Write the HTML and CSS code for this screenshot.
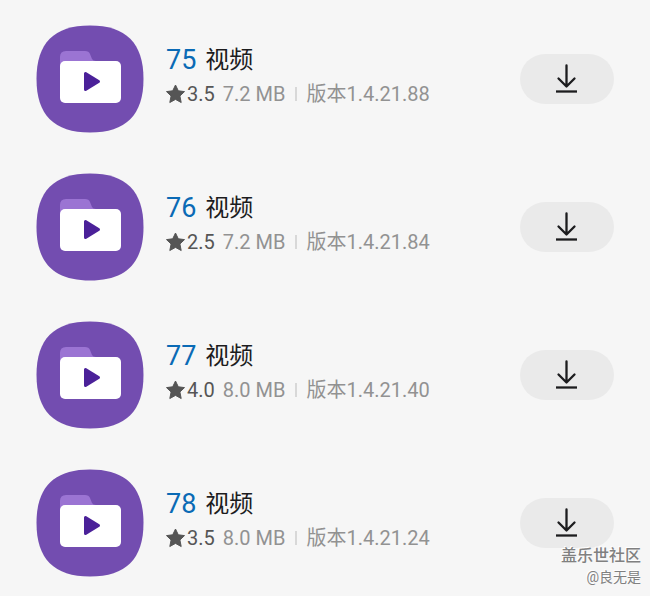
FILE: index.html
```
<!DOCTYPE html>
<html lang="zh-CN">
<head>
<meta charset="utf-8">
<meta name="viewport" content="width=device-width, initial-scale=1">
<title>视频</title>
<link rel="stylesheet" href="styles.css">
</head>
<body>
<svg class="defs" aria-hidden="true">
  <symbol id="app" viewBox="0 0 108 108">
    <path fill="#734db0" d="M54 .5C90 .5 107.500 18 107.500 54S90 107.500 54 107.500.5 90 .5 54 18 .5 54 .5Z"/>
    <path fill="#9b74d3" d="M24 46V32q0-6 6-6h19q4 0 5 3l2 5q1 2 4 2v10Z"/>
    <rect x="24" y="36" width="61" height="42" rx="5" fill="#fff"/>
    <path fill="#4b2199" stroke="#4b2199" stroke-width="3" stroke-linejoin="round" d="M49.500 48.500v16l13-8Z"/>
  </symbol>
  <symbol id="star" viewBox="0 0 20 20">
    <path fill="#555" stroke="#555" stroke-width="1" stroke-linejoin="round" d="M9.500 1l2.800 5.800 6.200.8-4.600 4.400 1.300 6.500L9.500 15.400 3.800 18.500 5.100 12 .5 7.600l6.200-.8Z"/>
  </symbol>
  <symbol id="download" viewBox="0 0 24 30">
    <path fill="none" stroke="#1c1c1e" stroke-width="2.300" stroke-linecap="round" stroke-linejoin="round" d="M11.500 1.500v21M3.500 14.500l8 8 8-8"/>
    <path fill="none" stroke="#1c1c1e" stroke-width="2.300" d="M1 27.500h21"/>
  </symbol>
</svg>
<main class="list">
  <article class="row">
    <svg class="icon" aria-hidden="true"><use href="#app"/></svg>
    <div class="info">
      <h2 class="title"><span class="num">75</span><span>视频</span></h2>
      <p class="meta"><svg class="star" aria-hidden="true"><use href="#star"/></svg><span class="score">3.5</span><span>7.2 MB</span><span class="bar"></span><span>版本1.4.21.88</span></p>
    </div>
    <button class="get" type="button" aria-label="下载"><svg class="arrow" aria-hidden="true"><use href="#download"/></svg></button>
  </article>
  <article class="row">
    <svg class="icon" aria-hidden="true"><use href="#app"/></svg>
    <div class="info">
      <h2 class="title"><span class="num">76</span><span>视频</span></h2>
      <p class="meta"><svg class="star" aria-hidden="true"><use href="#star"/></svg><span class="score">2.5</span><span>7.2 MB</span><span class="bar"></span><span>版本1.4.21.84</span></p>
    </div>
    <button class="get" type="button" aria-label="下载"><svg class="arrow" aria-hidden="true"><use href="#download"/></svg></button>
  </article>
  <article class="row">
    <svg class="icon" aria-hidden="true"><use href="#app"/></svg>
    <div class="info">
      <h2 class="title"><span class="num">77</span><span>视频</span></h2>
      <p class="meta"><svg class="star" aria-hidden="true"><use href="#star"/></svg><span class="score">4.0</span><span>8.0 MB</span><span class="bar"></span><span>版本1.4.21.40</span></p>
    </div>
    <button class="get" type="button" aria-label="下载"><svg class="arrow" aria-hidden="true"><use href="#download"/></svg></button>
  </article>
  <article class="row">
    <svg class="icon" aria-hidden="true"><use href="#app"/></svg>
    <div class="info">
      <h2 class="title"><span class="num">78</span><span>视频</span></h2>
      <p class="meta"><svg class="star" aria-hidden="true"><use href="#star"/></svg><span class="score">3.5</span><span>8.0 MB</span><span class="bar"></span><span>版本1.4.21.24</span></p>
    </div>
    <button class="get" type="button" aria-label="下载"><svg class="arrow" aria-hidden="true"><use href="#download"/></svg></button>
  </article>
  <div class="mark"><span class="site">盖乐世社区</span><span class="user">@良无是</span></div>
</main>
</body>
</html>
```
FILE: styles.css
```
* {
  box-sizing: border-box;
}

body {
  margin: 0;
  background: #f6f6f6;
  font-family: Roboto, "Noto Sans CJK SC", sans-serif;
}

.defs {
  position: absolute;
  width: 0;
  height: 0;
}

.list {
  position: relative;
  padding: 5px 36px 0;
}

.row {
  display: flex;
  align-items: center;
  height: 148px;
}

.icon {
  flex: none;
  width: 108px;
  height: 108px;
}

.info {
  flex: 1;
  margin-left: 22px;
  padding-bottom: 6px;
}

.title {
  display: flex;
  align-items: center;
  gap: 9px;
  margin: 0;
  font-size: 24px;
  font-weight: 400;
  line-height: 36px;
  color: #1c1c1e;
}

.num {
  font-size: 27px;
  color: #0a6ab5;
}

.meta {
  display: flex;
  align-items: center;
  margin: 0;
  font-size: 20px;
  line-height: 32px;
  color: #929292;
  white-space: nowrap;
}

.star {
  width: 20px;
  height: 20px;
  margin-right: 1px;
}

.score {
  margin-right: 8px;
  color: #555;
}

.bar {
  width: 2px;
  height: 14px;
  margin: 0 9px 0 10px;
  background: #d8d8d8;
}

.get {
  display: grid;
  place-items: center;
  width: 94px;
  height: 50px;
  padding: 0;
  border: 0;
  border-radius: 25px;
  background: #eaeaea;
}

.arrow {
  width: 24px;
  height: 30px;
}

.mark {
  position: absolute;
  right: 9px;
  bottom: 10px;
  display: flex;
  flex-direction: column;
  align-items: flex-end;
  color: #808080;
  text-shadow: -1px -1px 0 #fff;
}

.site {
  font-size: 16px;
  font-weight: 500;
  line-height: 22px;
}

.user {
  font-size: 14px;
  line-height: 20px;
}
```
